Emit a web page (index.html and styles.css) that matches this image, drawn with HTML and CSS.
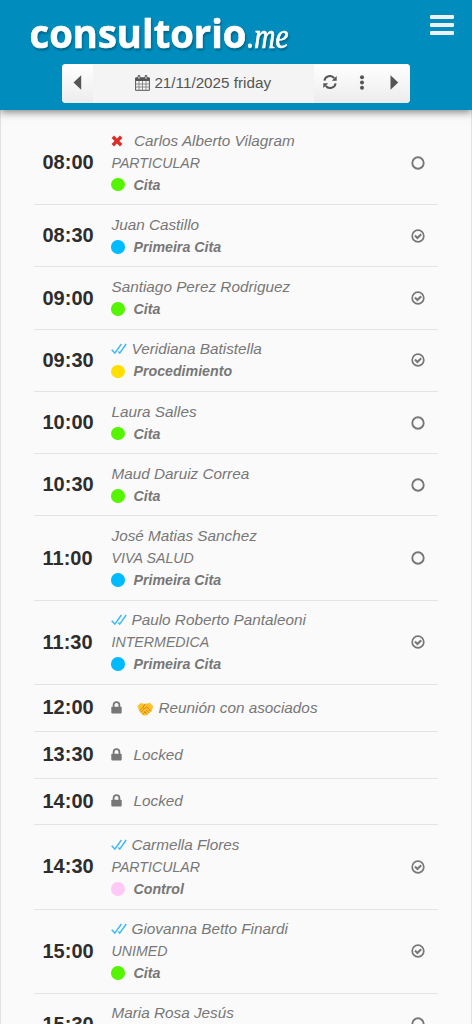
FILE: index.html
```
<!DOCTYPE html>
<html lang="es">
<head>
<meta charset="utf-8">
<title>consultorio.me</title>
<link rel="stylesheet" href="styles.css">
</head>
<body>
<svg class="defs" width="0" height="0" aria-hidden="true">
  <symbol id="open" viewBox="0 0 14 14"><circle cx="7" cy="7" r="5.7" fill="none" stroke="#777" stroke-width="1.9"/></symbol>
  <symbol id="done" viewBox="0 0 14 14"><circle cx="7" cy="7" r="5.8" fill="none" stroke="#777" stroke-width="1.7"/><path d="M4 6.6l2.4 2.4 3.8-3.8" fill="none" stroke="#777" stroke-width="2.1"/></symbol>
  <symbol id="seen" viewBox="0 0 16 12"><path d="M.7 6.7l3.2 3.4L10.4 1M7.3 8.6l1.4 1.5L15.2 1" fill="none" stroke="#42b8f5" stroke-width="1.5"/></symbol>
  <symbol id="cross" viewBox="0 0 12 12"><path d="M1.8 1.8l8.4 8.4M10.2 1.8l-8.4 8.4" stroke="#d9302c" stroke-width="3.5"/></symbol>
  <symbol id="lock" viewBox="0 0 11 13"><path d="M2.6 6.5V4a2.9 2.9 0 0 1 5.8 0v2.5" fill="none" stroke="#777" stroke-width="1.8"/><rect x=".3" y="5.8" width="10.4" height="6.6" rx=".8" fill="#777"/></symbol>
</svg>
<header class="header">
  <div class="brand">
    <svg class="logo" width="270" height="46" viewBox="0 0 270 46">
      <text class="logo-main" x="-.5" y="37.5" textLength="217" lengthAdjust="spacingAndGlyphs">consultorio</text>
      <text class="logo-suffix" x="217" y="37.5" textLength="41.5" lengthAdjust="spacingAndGlyphs">.me</text>
    </svg>
    <div class="menu"><span></span><span></span><span></span></div>
  </div>
  <div class="toolbar">
    <div class="prev"><svg width="9" height="15"><path d="M8.2 .3v14.4L.5 7.5z"/></svg></div>
    <div class="date">
      <svg width="15" height="16" viewBox="0 0 15 16"><path d="M.6 3h13.8v12.3H.6z" fill="#f4f4f4" stroke="#555"/><path d="M.7 9h13.6M.7 12h13.6M4 6v9M7.5 6v9M11 6v9" fill="none" stroke="#777" stroke-width=".8"/><path d="M.5 2.5h14V6H.5z"/><path d="M4 1.3v2.6M11 1.3v2.6" stroke="#555" stroke-width="2.6" stroke-linecap="round"/><path d="M4 1.3v2.6M11 1.3v2.6" stroke="#f4f4f4" stroke-width=".9"/></svg>
      <span>21/11/2025 friday</span>
    </div>
    <div class="actions">
      <svg width="14" height="14" viewBox="0 0 14 14"><path d="M1.4 5.7A5.5 5.5 0 0 1 11.2 3.2M12.6 8.3A5.5 5.5 0 0 1 2.8 10.8" fill="none" stroke="#555" stroke-width="2"/><path d="M13.7 .9v4.9H8.8zM.3 13.1V8.2h4.9z"/></svg>
      <svg width="6" height="15"><circle cx="3" cy="2.3" r="2"/><circle cx="3" cy="7.5" r="2"/><circle cx="3" cy="12.7" r="2"/></svg>
      <svg width="9" height="15"><path d="M.5 .3v14.4L8.2 7.5z"/></svg>
    </div>
  </div>
</header>
<main class="agenda">
  <div class="row"><time>08:00</time><div class="info"><div class="name"><svg class="cross"><use href="#cross"/></svg>Carlos Alberto Vilagram</div><div class="plan">PARTICULAR</div><div class="kind"><i class="dot green"></i>Cita</div></div><svg class="state"><use href="#open"/></svg></div>
  <div class="row"><time>08:30</time><div class="info"><div class="name">Juan Castillo</div><div class="kind"><i class="dot blue"></i>Primeira Cita</div></div><svg class="state"><use href="#done"/></svg></div>
  <div class="row"><time>09:00</time><div class="info"><div class="name">Santiago Perez Rodriguez</div><div class="kind"><i class="dot green"></i>Cita</div></div><svg class="state"><use href="#done"/></svg></div>
  <div class="row"><time>09:30</time><div class="info"><div class="name"><svg class="seen"><use href="#seen"/></svg>Veridiana Batistella</div><div class="kind"><i class="dot yellow"></i>Procedimiento</div></div><svg class="state"><use href="#done"/></svg></div>
  <div class="row"><time>10:00</time><div class="info"><div class="name">Laura Salles</div><div class="kind"><i class="dot green"></i>Cita</div></div><svg class="state"><use href="#open"/></svg></div>
  <div class="row"><time>10:30</time><div class="info"><div class="name">Maud Daruiz Correa</div><div class="kind"><i class="dot green"></i>Cita</div></div><svg class="state"><use href="#open"/></svg></div>
  <div class="row"><time>11:00</time><div class="info"><div class="name">José Matias Sanchez</div><div class="plan">VIVA SALUD</div><div class="kind"><i class="dot blue"></i>Primeira Cita</div></div><svg class="state"><use href="#open"/></svg></div>
  <div class="row"><time>11:30</time><div class="info"><div class="name"><svg class="seen"><use href="#seen"/></svg>Paulo Roberto Pantaleoni</div><div class="plan">INTERMEDICA</div><div class="kind"><i class="dot blue"></i>Primeira Cita</div></div><svg class="state"><use href="#done"/></svg></div>
  <div class="row locked"><time>12:00</time><div class="info"><div class="name"><svg class="lock"><use href="#lock"/></svg><svg class="shake" viewBox="0 0 17 14"><path d="M.5 4L3.8 1l4.4 1L12.8.8l3.5 3.4-1.7 4.7-5.1 4.5-3.3.1L2.4 9.6z" fill="#ffc22c"/><path d="M8.2 2L5.8 5.5l1.7 1 2.3-1.4 4.2 4M3 8l2-1.5M4.2 10l2.2-2M6 11.8l2-1.8M9.5 8l2.3 2.6M7.8 9.5l2 2.5" fill="none" stroke="#cc8018" stroke-width=".9" stroke-linecap="round"/></svg>Reunión con asociados</div></div></div>
  <div class="row locked"><time>13:30</time><div class="info"><div class="name"><svg class="lock"><use href="#lock"/></svg>Locked</div></div></div>
  <div class="row locked"><time>14:00</time><div class="info"><div class="name"><svg class="lock"><use href="#lock"/></svg>Locked</div></div></div>
  <div class="row"><time>14:30</time><div class="info"><div class="name"><svg class="seen"><use href="#seen"/></svg>Carmella Flores</div><div class="plan">PARTICULAR</div><div class="kind"><i class="dot pink"></i>Control</div></div><svg class="state"><use href="#done"/></svg></div>
  <div class="row"><time>15:00</time><div class="info"><div class="name"><svg class="seen"><use href="#seen"/></svg>Giovanna Betto Finardi</div><div class="plan">UNIMED</div><div class="kind"><i class="dot green"></i>Cita</div></div><svg class="state"><use href="#done"/></svg></div>
  <div class="row"><time>15:30</time><div class="info"><div class="name">Maria Rosa Jesús</div><div class="kind"></div></div><svg class="state"><use href="#open"/></svg></div>
</main>
</body>
</html>
```
FILE: styles.css
```
* { box-sizing: border-box; }
body {
  margin: 0;
  height: 1024px;
  overflow: hidden;
  display: flex;
  flex-direction: column;
  background: #fafafa;
  font-family: "Liberation Sans", Arial, sans-serif;
  color: #777;
}
svg { flex: none; }
.defs { display: none; }
.header {
  position: relative;
  flex: none;
  height: 110px;
  background: #008dbd;
  box-shadow: 0 2px 8px rgba(0, 0, 0, .5);
}
.brand {
  display: flex;
  justify-content: space-between;
  height: 64px;
  padding: 10px 18px 0 30px;
}
.logo {
  fill: #fff;
  overflow: visible;
  filter: drop-shadow(1px 2px 1px rgba(0, 0, 0, .3));
}
.logo-main {
  font: 700 40px "Open Sans", sans-serif;
  stroke: #fff;
  stroke-width: .6px;
}
.logo-suffix {
  font: italic 400 35px "Liberation Serif", serif;
  stroke: #fff;
  stroke-width: .7px;
}
.menu {
  display: flex;
  flex-direction: column;
  gap: 4px;
  padding-top: 5px;
}
.menu span {
  width: 24px;
  height: 4px;
  border-radius: 1px;
  background: #eef0f2;
}
.toolbar {
  display: flex;
  width: 348.5px;
  height: 38.5px;
  margin-left: 61.5px;
  border-radius: 4px;
  overflow: hidden;
  background: #f4f4f4;
  fill: #555;
}
.prev, .actions {
  display: flex;
  align-items: center;
  padding-bottom: 2px;
  background: linear-gradient(#fff, #ececec);
}
.prev { width: 31px; padding-left: 11.5px; }
.actions {
  width: 96px;
  padding-left: 9px;
}
.actions svg:nth-child(2) { margin: 0 25px 0 22px; }
.date {
  flex: 1;
  display: flex;
  align-items: center;
  justify-content: center;
  gap: 4px;
  padding-bottom: 1px;
  color: #555;
  font-size: 15.25px;
}
.agenda {
  flex: 1;
  min-height: 0;
  overflow: hidden;
  padding: 11px 33.5px 0 33px;
  border: solid #e2e2e2;
  border-width: 0 1px;
}
.row {
  display: flex;
  align-items: center;
  height: 62.25px;
  border-bottom: 1px solid #e4e4e4;
}
.row:has(.plan) { height: 84.2px; }
.locked { height: 46.85px; }
time {
  width: 77.5px;
  padding-left: 8.5px;
  color: #2d2d2d;
  font-size: 20px;
  font-weight: bold;
}
.info { flex: 1; font-style: italic; }
.name, .plan, .kind {
  display: flex;
  align-items: center;
  height: 22px;
  white-space: nowrap;
}
.name { font-size: 15.3px; }
.plan { font-size: 14.2px; }
.kind { font-size: 14.2px; font-weight: bold; }
.dot {
  width: 13.5px;
  height: 13.5px;
  margin: 0 9px 0 -.5px;
  border-radius: 50%;
}
.green { background: #55f500; }
.blue { background: #00bbff; }
.yellow { background: #ffdf00; }
.pink { background: #ffc9f5; }
.cross { width: 12px; height: 12px; margin: 0 11px 0 -.5px; }
.seen { width: 16px; height: 12px; margin: 0 4.5px 0 -.5px; }
.lock { width: 11px; height: 13px; margin: 0 12px 1px -1px; }
.shake { width: 17px; height: 14px; margin: 2px 5px 0 3px; }
.state { width: 14px; height: 14px; margin-right: 12.5px; }
```
